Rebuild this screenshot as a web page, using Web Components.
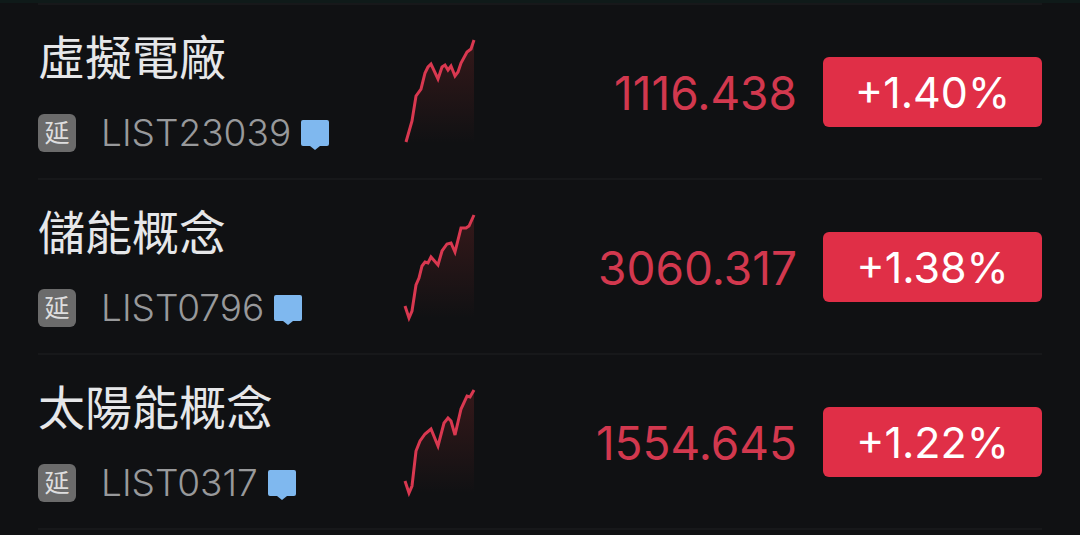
<!DOCTYPE html>
<html lang="zh-Hant">
<head>
<meta charset="utf-8">
<meta name="viewport" content="width=device-width, initial-scale=1">
<title>概念板塊</title>
<style>
  html { background: #101113; }
  body { margin: 0; font-family: Inter, "Noto Sans CJK TC", sans-serif; color: #e6e7e9; }
</style>
</head>
<body>
<quote-list>
  <quote-row name="虛擬電廠" code="LIST23039" price="1116.438" change="+1.40%"
    points="6,103 12,82 16,57 21,50 25,34 28,28 31,25 38,40 42,28 45,26 48,31 51,27 55,37 58,33 61,24 67,13 71,10 74,1"></quote-row>
  <quote-row name="儲能概念" code="LIST0796" price="3060.317" change="+1.38%"
    points="5,92 9,104 12,97 16,71 19,64 22,52 25,48 28,49 31,43 38,51 42,37 47,30 51,29 55,38 61,14 66,14 69,12 74,1"></quote-row>
  <quote-row name="太陽能概念" code="LIST0317" price="1554.645" change="+1.22%"
    points="5,92 9,104 12,97 16,62 20,52 25,45 31,40 38,57 44,34 48,29 51,32 55,46 61,20 67,7 70,8 74,1"></quote-row>
</quote-list>

<script>
  const define = (tag, markup, setup) => {
    const template = document.createElement('template');
    template.innerHTML = markup;
    customElements.define(tag, class extends HTMLElement {
      connectedCallback() {
        if (this.shadowRoot) return;
        const content = template.content.cloneNode(true);
        if (setup) setup(this, content);
        this.attachShadow({ mode: 'open' }).append(content);
      }
    });
  };

  define('quote-list', `
    <style>
      :host { display: block; padding: 0 38px 5px; border-top: 3px solid #0f1a19; }
      div { border-top: 2px solid #17181a; }
    </style>
    <div role="list"><slot></slot></div>`);

  define('delay-badge', `
    <style>
      :host { display: grid; place-items: center; width: 38px; height: 38px; border-radius: 6px;
        background: #6b6b6b; color: #dededf; font-size: 25px; line-height: 38px; }
    </style>
    <slot></slot>`);

  define('note-icon', `
    <style>:host, svg { display: block; }</style>
    <svg width="30" height="32" viewBox="0 0 30 32" aria-hidden="true">
      <path fill="#7fb8ef" d="M3 1H27Q29 1 29 3V25Q29 27 27 27H20L15 31L10 27H3Q1 27 1 25V3Q1 1 3 1Z"/>
    </svg>`);

  define('spark-line', `
    <style>:host, svg { display: block; }</style>
    <svg width="80" height="108" viewBox="0 0 80 108" aria-hidden="true">
      <defs>
        <linearGradient id="fade" x1="0" y1="0" x2="0" y2="1">
          <stop offset="0" stop-color="#e03a38" stop-opacity=".18"/>
          <stop offset="1" stop-color="#e03a38" stop-opacity="0"/>
        </linearGradient>
      </defs>
      <polygon fill="url(#fade)"/>
      <polyline fill="none" stroke="#d93850" stroke-width="3" stroke-linejoin="miter"/>
    </svg>`, (host, root) => {
      const points = host.getAttribute('points');
      const start = points.split(',')[0];
      root.querySelector('polyline').setAttribute('points', points);
      root.querySelector('polygon').setAttribute('points', points + ' 74,104 ' + start + ',104');
    });

  define('change-button', `
    <style>
      :host { display: block; }
      button { display: block; width: 100%; height: 70px; padding: 0; border: 0; border-radius: 6px;
        background: #e02f47; color: #fff; font: inherit; font-size: 43px; line-height: 70px; text-align: center; }
    </style>
    <button type="button"><slot></slot></button>`);

  define('quote-row', `
    <style>
      :host { display: grid; grid-template-columns: 362px 80px minmax(0, 1fr) 219px; align-items: start;
        box-sizing: border-box; height: 175px; border-bottom: 2px solid #17181a; }
      .name { margin: 0; padding-top: 24px; font-size: 47px; font-weight: 400; line-height: 58px; white-space: nowrap; }
      .meta { display: flex; align-items: center; margin-top: 21px; height: 50px; }
      .code { margin: 0 9px 0 25px; color: #98999b; font-size: 37px; font-weight: 300; line-height: 50px; }
      note-icon { padding-top: 4px; }
      spark-line { margin-top: 34px; }
      .price { margin-top: 52px; padding-right: 26px; text-align: right; color: #d2384e; font-size: 46px; line-height: 72px; }
      change-button { margin-top: 52px; }
    </style>
    <div>
      <h2 class="name"></h2>
      <div class="meta"><delay-badge>延</delay-badge><span class="code"></span><note-icon></note-icon></div>
    </div>
    <spark-line></spark-line>
    <div class="price"></div>
    <change-button></change-button>`, (host, root) => {
      host.setAttribute('role', 'listitem');
      root.querySelector('.name').textContent = host.getAttribute('name');
      root.querySelector('.code').textContent = host.getAttribute('code');
      root.querySelector('.price').textContent = host.getAttribute('price');
      root.querySelector('change-button').textContent = host.getAttribute('change');
      root.querySelector('spark-line').setAttribute('points', host.getAttribute('points'));
    });
</script>
</body>
</html>
